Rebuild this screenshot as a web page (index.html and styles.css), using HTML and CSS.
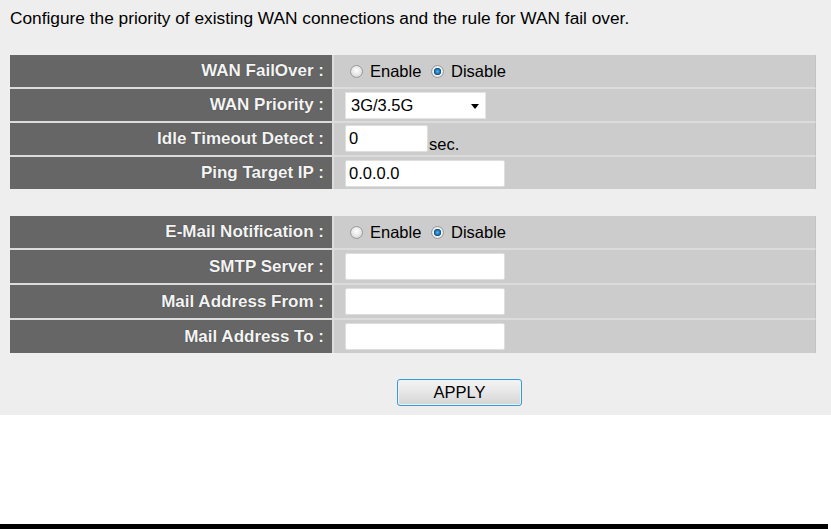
FILE: index.html
```html
<!DOCTYPE html>
<html lang="en">

<head>
    <meta charset="UTF-8" />
    <meta name="viewport" content="width=device-width, initial-scale=1.0" />
    <title>WAN Fail Over</title>
    <link rel="stylesheet" href="styles.css">
</head>

<body>
    <div class="panel">
        <p class="intro">Configure the priority of existing WAN connections and the rule for WAN fail over.</p>

        <table class="form-table">
            <tr class="row-radio">
                <td class="label">WAN FailOver :</td>
                <td class="value">
                    <label><input type="radio" name="failover" value="1" />Enable</label>
                    <label><input type="radio" name="failover" value="0" checked />Disable</label>
                </td>
            </tr>
            <tr class="row-radio">
                <td class="label">WAN Priority :</td>
                <td class="value">
                    <span class="select-wrap">
                        <select class="priority">
                            <option>3G/3.5G</option>
                            <option>WAN</option>
                        </select>
                    </span>
                </td>
            </tr>
            <tr class="row-radio">
                <td class="label">Idle Timeout Detect :</td>
                <td class="value"><input type="text" class="short" value="0" /><span class="unit">sec.</span></td>
            </tr>
            <tr class="row-radio">
                <td class="label">Ping Target IP :</td>
                <td class="value"><input type="text" class="long" value="0.0.0.0" /></td>
            </tr>
        </table>

        <table class="form-table second">
            <tr class="row-radio">
                <td class="label">E-Mail Notification :</td>
                <td class="value">
                    <label><input type="radio" name="mail" value="1" />Enable</label>
                    <label><input type="radio" name="mail" value="0" checked />Disable</label>
                </td>
            </tr>
            <tr class="row-input">
                <td class="label">SMTP Server :</td>
                <td class="value"><input type="text" class="long" /></td>
            </tr>
            <tr class="row-input">
                <td class="label">Mail Address From :</td>
                <td class="value"><input type="text" class="long" /></td>
            </tr>
            <tr class="row-input">
                <td class="label">Mail Address To :</td>
                <td class="value"><input type="text" class="long" /></td>
            </tr>
        </table>

        <div class="actions">
            <button class="apply">APPLY</button>
        </div>
    </div>

    <div class="footer-bar"></div>
</body>

</html>
```

FILE: styles.css
```css
:root {
    --cor-painel: #eeeeee;
    --cor-rotulo: #666666;
    --cor-valor: #cccccc;
    --cor-linha: #dcdcdc;
}

body {
    font-family: "Liberation Sans", Arial, sans-serif;
    font-size: 16.5px;
    margin: 0;
    background-color: #fff;
    color: #000;
}

.panel {
    background-color: var(--cor-painel);
    padding: 0 10px 9px;
}

.intro {
    margin: 0 0 27px;
    padding-top: 8px;
    line-height: 20px;
    font-size: 17.3px;
}

.form-table {
    width: 806px;
    border-collapse: separate;
    border-spacing: 0;
}

.form-table.second {
    margin-top: 27px;
}

.form-table td {
    padding: 0;
    vertical-align: middle;
    border-bottom: 2px solid var(--cor-linha);
}

.form-table tr:last-child td {
    border-bottom: none;
}

.row-radio td {
    height: 32px;
}

.row-input td {
    height: 33px;
}

.label {
    width: 324px;
    box-sizing: border-box;
    background-color: var(--cor-rotulo);
    border-right: 2px solid var(--cor-linha);
    color: #f4f4f4;
    font-size: 17px;
    font-weight: bold;
    text-align: right;
    padding-right: 8px !important;
    text-shadow: 0 0 1px #333;
}

.value {
    background-color: var(--cor-valor);
    padding-left: 11px !important;
    border-right: 1px solid #c2c2c2;
}

input[type="radio"] {
    appearance: none;
    width: 13px;
    height: 13px;
    margin: 0 7px 0 5px;
    vertical-align: -1px;
    border: 1px solid #9a9a9a;
    border-radius: 50%;
    background: radial-gradient(circle at 50% 40%, #ffffff 0, #e8e8e8 50%, #c8c8c8 100%);
}

input[type="radio"]:checked {
    background: radial-gradient(circle, #5fb4ea 0, #1670b0 2.5px, #0d4f80 3.4px, #f2f2f2 4px, #d0d0d0 100%);
}

.select-wrap {
    position: relative;
    display: inline-block;
}

.select-wrap::after {
    content: "";
    position: absolute;
    right: 7px;
    top: 12px;
    border-left: 4px solid transparent;
    border-right: 4px solid transparent;
    border-top: 5px solid #000;
    pointer-events: none;
}

.priority {
    appearance: none;
    width: 141px;
    height: 27px;
    border: 1px solid #e4e4e4;
    background-color: #fff;
    font: inherit;
    padding: 0 0 0 5px;
    color: #000;
    vertical-align: middle;
}

input[type="text"] {
    box-sizing: border-box;
    height: 27px;
    border: 1px solid #dedede;
    border-radius: 2px;
    background-color: #fff;
    font: inherit;
    padding: 0 3px;
    color: #000;
}

.short {
    width: 83px;
}

.long {
    width: 160px;
}

.unit {
    margin-left: 1px;
    vertical-align: -6px;
}

.actions {
    margin-top: 26px;
    padding-left: 387px;
}

.apply {
    width: 125px;
    height: 27px;
    border: 1px solid #3a9ad6;
    border-radius: 3px;
    background: linear-gradient(#f4f4f4, #e6e6e6 50%, #d4d4d4);
    box-shadow: inset 0 0 0 1px #e8f3fa;
    font: inherit;
    color: #000;
    padding: 0;
}

.footer-bar {
    width: 828px;
    height: 5px;
    margin-top: 109px;
    background-color: #000;
}
```
